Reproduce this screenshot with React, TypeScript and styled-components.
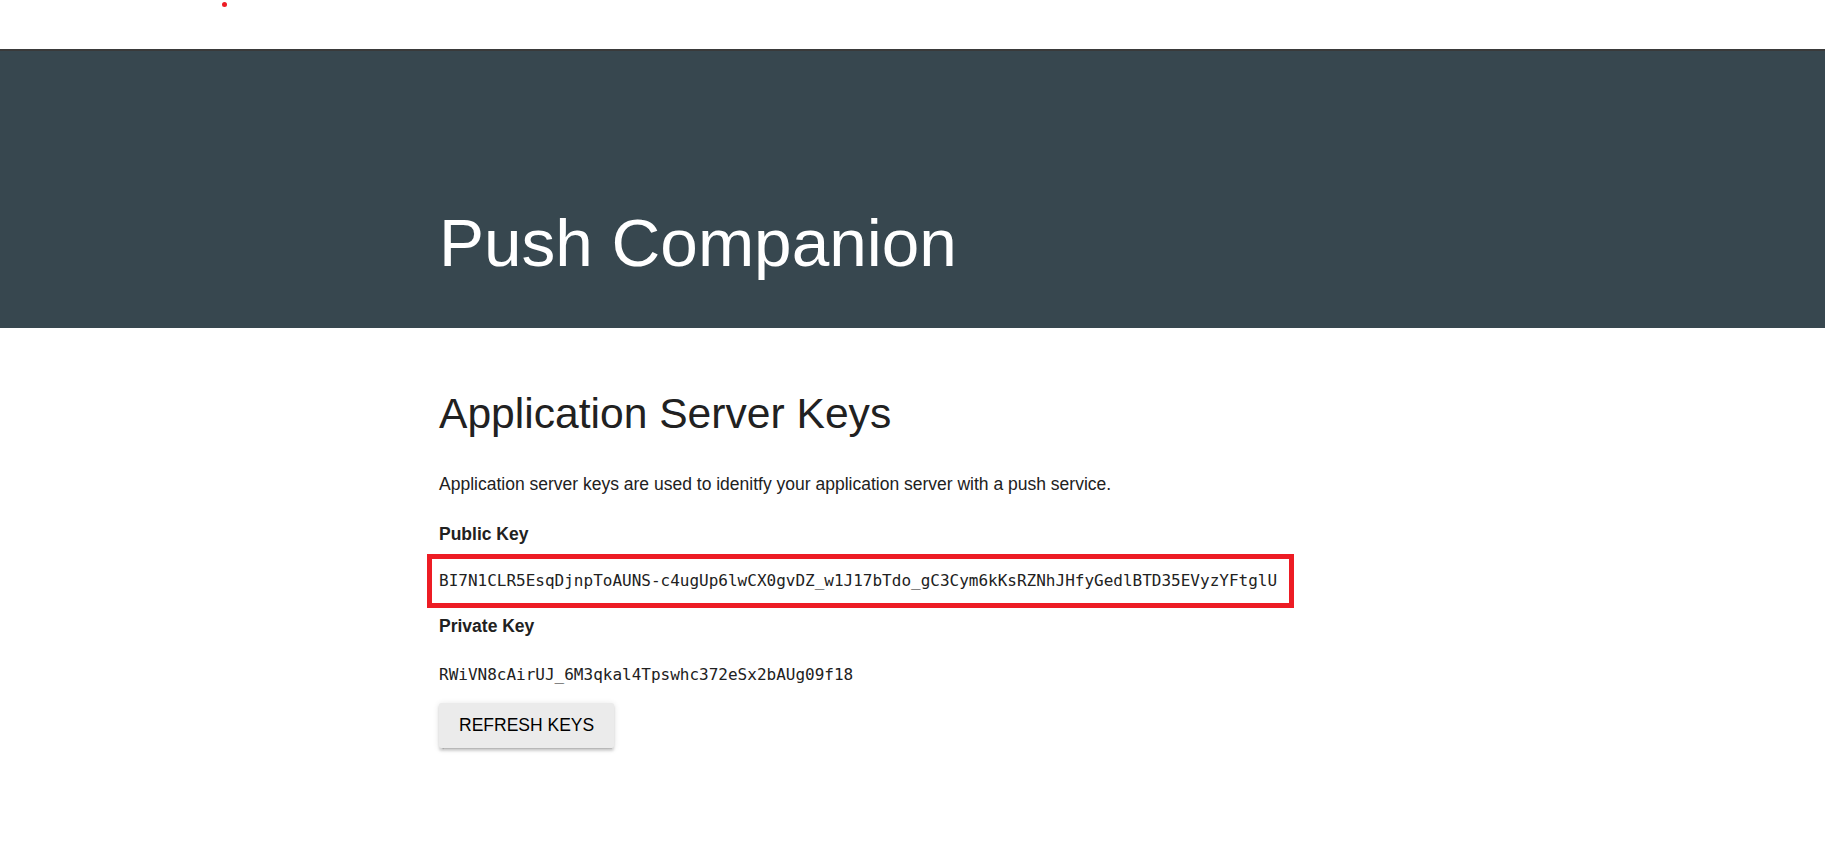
import React, { useState } from "react";
import styled, { createGlobalStyle } from "styled-components";

const GlobalStyle = createGlobalStyle`
  html, body {
    margin: 0;
    padding: 0;
    background: #fff;
  }
  body {
    font-family: "Liberation Sans", Arial, sans-serif;
    color: #212121;
  }
`;

const TopBand = styled.div`
  height: 49px;
  display: flex;
  align-items: flex-start;
  padding: 2px 0 0 222px;
  box-sizing: border-box;
`;

const Dot = styled.span`
  width: 5px;
  height: 5px;
  border-radius: 50%;
  background: #ed1c24;
`;

const Header = styled.header`
  background: #37474f;
  border-top: 2px solid #3a3a3a;
  height: 279px;
  box-sizing: border-box;
  padding-top: 158px;
`;

const Container = styled.div`
  width: 947px;
  margin: 0 auto;
`;

const Title = styled.h1`
  margin: 0;
  font-size: 67.5px;
  font-weight: 400;
  line-height: 1;
  color: #fff;
`;

const Main = styled.main`
  padding-top: 64px;
  padding-bottom: 80px;
`;

const Heading = styled.h2`
  margin: 0 0 37px;
  font-size: 42.6px;
  font-weight: 400;
  line-height: 1;
  color: #212121;
`;

const Text = styled.p`
  margin: 0 0 26px;
  font-size: 17.5px;
  line-height: 24px;
`;

const Label = styled.h3<{ $gap: number }>`
  margin: 0 0 ${(p) => p.$gap}px;
  font-size: 17.5px;
  font-weight: 700;
  line-height: 24px;
`;

const Key = styled.div<{ $marked?: boolean }>`
  font-family: "DejaVu Sans Mono", "Liberation Mono", monospace;
  font-size: 16px;
  color: #212121;
  white-space: nowrap;
  ${(p) =>
    p.$marked
      ? `
    display: inline-block;
    border: 5px solid #ed1c24;
    margin: 0 0 6px -12px;
    padding: 0 12px 0 7px;
    line-height: 44px;
  `
      : `
    line-height: 24px;
    margin-bottom: 16px;
  `}
`;

const Button = styled.button`
  height: 45px;
  min-width: 80px;
  padding: 0 20px;
  border: none;
  border-radius: 2.5px;
  background: #ebebeb;
  color: #000;
  font-family: "Liberation Sans", Arial, sans-serif;
  font-size: 17.5px;
  text-transform: uppercase;
  cursor: pointer;
  box-shadow: 0 2.5px 2.5px 0 rgba(0, 0, 0, 0.14),
    0 3.5px 1px -2.5px rgba(0, 0, 0, 0.2), 0 1px 6px 0 rgba(0, 0, 0, 0.12);
`;

const keys = {
  public:
    "BI7N1CLR5EsqDjnpToAUNS-c4ugUp6lwCX0gvDZ_w1J17bTdo_gC3Cym6kKsRZNhJHfyGedlBTD35EVyzYFtglU",
  private: "RWiVN8cAirUJ_6M3qkal4Tpswhc372eSx2bAUg09f18",
};

export default function App() {
  const [pair] = useState(keys);

  return (
    <>
      <GlobalStyle />
      <TopBand>
        <Dot />
      </TopBand>
      <Header>
        <Container>
          <Title>Push Companion</Title>
        </Container>
      </Header>
      <Main>
        <Container>
          <Heading>Application Server Keys</Heading>
          <Text>
            Application server keys are used to idenitfy your application
            server with a push service.
          </Text>
          <Label $gap={8}>Public Key</Label>
          <div>
            <Key $marked>{pair.public}</Key>
          </div>
          <Label $gap={25}>Private Key</Label>
          <Key>{pair.private}</Key>
          <Button>Refresh Keys</Button>
        </Container>
      </Main>
    </>
  );
}
